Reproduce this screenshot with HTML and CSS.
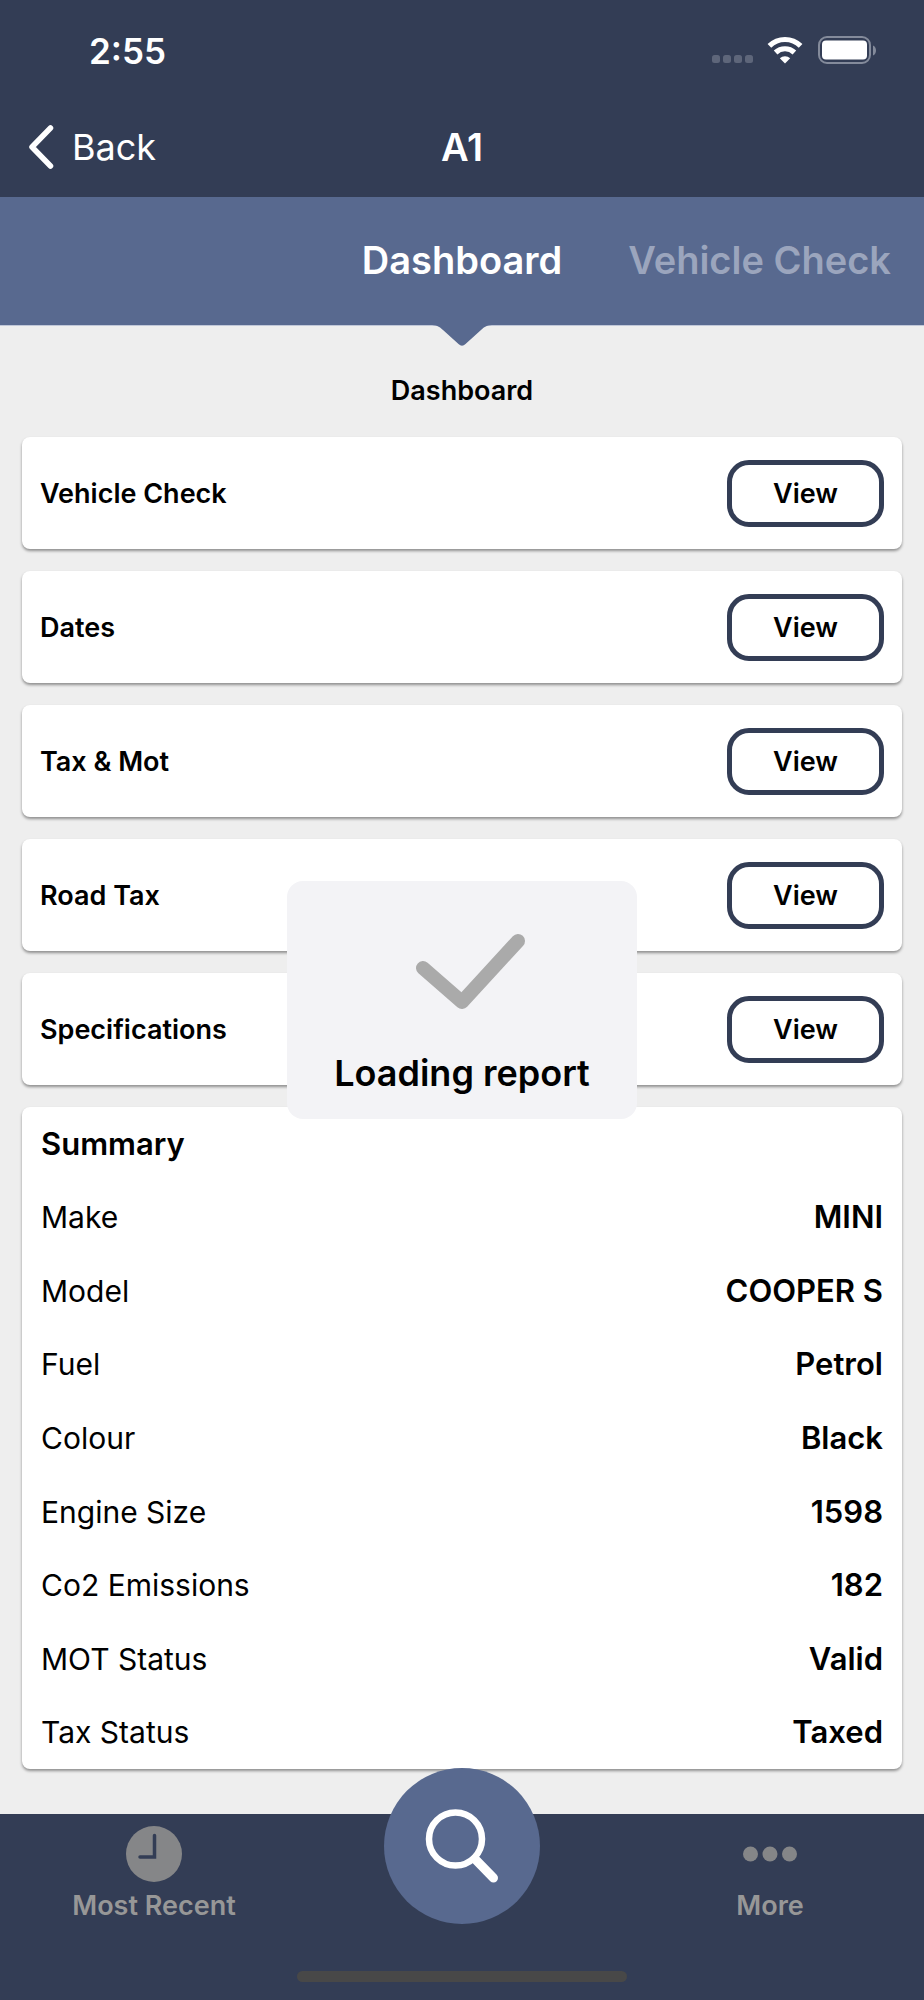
FILE: index.html
```html
<!DOCTYPE html>
<html lang="en">
<head>
<meta charset="utf-8">
<meta name="viewport" content="width=device-width, initial-scale=1">
<title>A1</title>
<link rel="stylesheet" href="styles.css">
</head>
<body>
<header class="header">
  <div class="status">
    <time class="status-time">2:55</time>
    <svg class="status-icons" width="166" height="30" viewBox="0 0 166 30" aria-hidden="true">
      <g fill="#5e667a"><rect x="0" y="19" width="8" height="8" rx="2.500"/><rect x="11" y="19" width="8" height="8" rx="2.500"/><rect x="22" y="19" width="8" height="8" rx="2.500"/><rect x="33" y="19" width="8" height="8" rx="2.500"/></g>
      <g fill="none" stroke="#fff" stroke-width="5.200"><path d="M57.400 9.900a22.200 22.200 0 0 1 31.200 0"/><path d="M63.600 16.500a13.600 13.600 0 0 1 18.800 0"/></g>
      <path d="M73 27.600l-5.200-5.400a7.600 7.600 0 0 1 10.400 0z" fill="#fff"/>
      <rect x="107" y="1" width="51" height="26" rx="8" fill="none" stroke="#848b9b" stroke-width="2"/>
      <rect x="110" y="4.500" width="45" height="19" rx="4" fill="#fff"/>
      <path d="M161 9.500c4 1.600 4 8.400 0 10z" fill="#848b9b"/>
    </svg>
  </div>
  <div class="navbar">
    <a class="back" href="#">
      <svg width="28" height="44" viewBox="0 0 28 44" aria-hidden="true"><path d="M22.500 3L4 22l18.500 19" fill="none" stroke="#fff" stroke-width="5.500" stroke-linecap="round" stroke-linejoin="round"/></svg>
      <span>Back</span>
    </a>
    <h1 class="title">A1</h1>
  </div>
</header>
<nav class="tabs">
  <a class="tab tab-active" href="#" aria-current="page">Dashboard</a>
  <a class="tab tab-next" href="#">Vehicle Check</a>
  <svg class="pointer" width="64" height="23" viewBox="0 0 64 23" aria-hidden="true"><path d="M0 0v1C6 1 9 2 13 6l15.500 14q3.500 3.500 7 0L51 6c4-4 7-5 13-5V0z" fill="#58698f"/></svg>
</nav>
<main class="content">
  <h2 class="section-title">Dashboard</h2>
  <section class="card card-link"><h3 class="card-title">Vehicle Check</h3><button class="view" type="button">View</button></section>
  <section class="card card-link"><h3 class="card-title">Dates</h3><button class="view" type="button">View</button></section>
  <section class="card card-link"><h3 class="card-title">Tax &amp; Mot</h3><button class="view" type="button">View</button></section>
  <section class="card card-link"><h3 class="card-title">Road Tax</h3><button class="view" type="button">View</button></section>
  <section class="card card-link"><h3 class="card-title">Specifications</h3><button class="view" type="button">View</button></section>
  <section class="card summary">
    <h3 class="summary-title">Summary</h3>
    <dl class="facts">
      <div class="fact"><dt>Make</dt><dd>MINI</dd></div>
      <div class="fact"><dt>Model</dt><dd>COOPER S</dd></div>
      <div class="fact"><dt>Fuel</dt><dd>Petrol</dd></div>
      <div class="fact"><dt>Colour</dt><dd>Black</dd></div>
      <div class="fact"><dt>Engine Size</dt><dd>1598</dd></div>
      <div class="fact"><dt>Co2 Emissions</dt><dd>182</dd></div>
      <div class="fact"><dt>MOT Status</dt><dd>Valid</dd></div>
      <div class="fact"><dt>Tax Status</dt><dd>Taxed</dd></div>
    </dl>
  </section>
</main>
<footer class="footer">
  <nav class="tabbar">
    <a class="item" href="#">
      <svg width="56" height="56" viewBox="0 0 56 56" aria-hidden="true"><circle cx="28" cy="28" r="28" fill="#858688"/><path d="M28.500 9.500V31H14" fill="none" stroke="#333d55" stroke-width="3.500" stroke-linecap="round"/></svg>
      <span>Most Recent</span>
    </a>
    <button class="search" type="button" aria-label="Search">
      <svg width="156" height="156" viewBox="0 0 156 156" aria-hidden="true"><circle cx="71.500" cy="71" r="26.500" fill="none" stroke="#fff" stroke-width="6.500"/><path d="M91 91l18.500 19" stroke="#fff" stroke-width="9" stroke-linecap="round"/></svg>
    </button>
    <a class="item" href="#">
      <svg width="56" height="56" viewBox="0 0 56 56" aria-hidden="true"><g fill="#858688"><circle cx="8.500" cy="28" r="7.500"/><circle cx="28" cy="28" r="7.500"/><circle cx="47.500" cy="28" r="7.500"/></g></svg>
      <span>More</span>
    </a>
  </nav>
  <div class="home-bar"></div>
</footer>
<div class="toast" role="status">
  <svg width="112" height="78" viewBox="0 0 112 78" aria-hidden="true"><path d="M9 36l39 34L104 9" fill="none" stroke="#aaa" stroke-width="14" stroke-linecap="round" stroke-linejoin="round"/></svg>
  <p class="toast-text">Loading report</p>
</div>
</body>
</html>
```
FILE: styles.css
```css
* { box-sizing: border-box; }
body {
  position: relative;
  display: flex;
  flex-direction: column;
  min-height: 100vh;
  margin: 0;
  background: #eee;
  color: #000;
  font-family: Inter, "Liberation Sans", sans-serif;
}
h1, h2, h3, p, dl, dd { margin: 0; }
a { color: inherit; text-decoration: none; }
svg { display: block; flex: none; }

.header { background: #333d55; color: #fff; }
.status {
  display: flex;
  align-items: center;
  justify-content: space-between;
  height: 98px;
  padding: 3px 46px 0 89px;
}
.status-time { font-size: 35px; font-weight: 600; }
.navbar {
  display: grid;
  grid-template-columns: 1fr auto 1fr;
  align-items: center;
  height: 99px;
  padding: 0 28px 1px;
}
.back { display: flex; align-items: center; gap: 16px; font-size: 36px; }
.title { font-size: 38px; font-weight: 600; }

.tabs {
  position: relative;
  display: grid;
  grid-template-columns: 1fr auto 1fr;
  column-gap: 66px;
  align-items: center;
  height: 129px;
  padding-bottom: 2px;
  border-bottom: 1px solid #c0c7d8;
  background: #58698f;
}
.tab { font-size: 38px; font-weight: 600; white-space: nowrap; }
.tab-active { grid-column: 2; color: #fff; }
.tab-next { color: #9ba5bd; }
.pointer { position: absolute; top: 127px; left: 50%; transform: translateX(-50%); }

.content { display: flex; flex: 1; flex-direction: column; gap: 22px; padding: 0 22px 45px; }
.section-title { margin-bottom: 8px; padding-top: 49px; font-size: 27px; font-weight: 600; line-height: 32px; text-align: center; }
.card {
  border-radius: 8px;
  background: #fff;
  box-shadow: 0 2px 3px rgba(0, 0, 0, 0.4);
}
.card-link { display: flex; align-items: center; justify-content: space-between; height: 112px; padding: 0 18px; }
.card-title { font-size: 27px; font-weight: 600; }
.view {
  width: 157px;
  height: 67px;
  padding: 0;
  border: 5px solid #333d55;
  border-radius: 22px;
  background: #fff;
  color: #000;
  font: 600 27px Inter, "Liberation Sans", sans-serif;
}
.summary { display: flex; flex: 1; flex-direction: column; padding: 0 19px; font-size: 30px; line-height: 36px; }
.summary-title { display: flex; flex: 1; align-items: center; font-size: 31px; font-weight: 600; }
.facts { display: flex; flex: 8; flex-direction: column; }
.fact { display: flex; flex: 1; align-items: center; justify-content: space-between; }
.fact dd { font-size: 31px; font-weight: 600; }

.footer { background: #333d55; color: #979797; }
.tabbar { display: grid; grid-template-columns: repeat(3, 1fr); height: 157px; }
.item {
  display: flex;
  flex-direction: column;
  align-items: center;
  gap: 8px;
  padding-top: 12px;
  font-size: 27px;
  font-weight: 600;
  line-height: 32px;
  white-space: nowrap;
}
.search {
  justify-self: center;
  width: 156px;
  height: 156px;
  margin-top: -46px;
  padding: 0;
  border: 0;
  border-radius: 50%;
  background: #58698f;
}
.home-bar { width: 330px; height: 11px; margin: 0 auto 18px; border-radius: 6px; background: #484848; }

.toast {
  position: absolute;
  top: 50%;
  left: 50%;
  display: flex;
  flex-direction: column;
  align-items: center;
  width: 350px;
  height: 238px;
  padding-top: 51px;
  gap: 41px;
  border-radius: 16px;
  background: #f3f3f6;
  transform: translate(-50%, -50%);
}
.toast svg { margin-left: 16px; }
.toast-text { font-size: 36px; font-weight: 600; line-height: 44px; }
```
